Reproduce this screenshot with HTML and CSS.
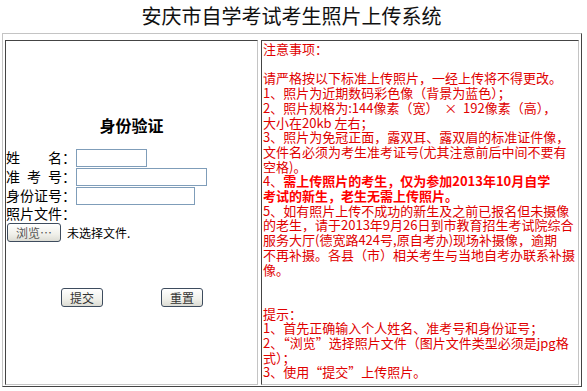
FILE: index.html
```html
<!DOCTYPE html>
<html lang="zh-CN">
<head>
<meta charset="utf-8">
<title>安庆市自学考试考生照片上传系统</title>
<link rel="stylesheet" href="styles.css">
</head>
<body>
<div class="title">安庆市自学考试考生照片上传系统</div>
<div class="frame">
  <div class="cell left">
    <h2 class="head">身份验证</h2>
    <div class="row"><span class="lbl">姓&emsp;&emsp;名：</span><input class="inp w1" type="text"></div>
    <div class="row"><span class="lbl">准&ensp;考&ensp;号：</span><input class="inp w2" type="text"></div>
    <div class="row"><span class="lbl">身份证号：</span><input class="inp w3" type="text"></div>
    <div class="row short"><span class="lbl">照片文件：</span></div>
    <div class="filerow"><button class="btn browse" type="button">浏览…</button><span class="nofile">未选择文件.</span></div>
    <div class="actions"><button class="btn act" type="button">提交</button><button class="btn act" type="button">重置</button></div>
  </div>
  <div class="cell right">注意事项：<br>
<br>
请严格按以下标准上传照片，一经上传将不得更改。<br>
1、照片为近期数码彩色像（背景为蓝色）；<br>
2、照片规格为:144像素（宽）&nbsp;&nbsp;×&nbsp;&nbsp;192像素（高），<br>
大小在20kb 左右；<br>
3、照片为免冠正面，露双耳、露双眉的标准证件像，<br>
文件名必须为考生准考证号(尤其注意前后中间不要有<br>
空格)。<br>
4、<b>需上传照片的考生，仅为参加2013年10月自学<br>考试的新生，老生无需上传照片。</b><br>
5、如有照片上传不成功的新生及之前已报名但未摄像<br>
的老生，请于2013年9月26日到市教育招生考试院综合<br>
服务大厅(德宽路424号,原自考办)现场补摄像，逾期<br>
不再补摄。各县（市）相关考生与当地自考办联系补摄<br>
像。<br>
<br>
<br>
提示：<br>
1、首先正确输入个人姓名、准考号和身份证号；<br>
2、“浏览”选择照片文件（图片文件类型必须是jpg格<br>
式）；<br>
3、使用“提交”上传照片。</div>
</div>
</body>
</html>
```
FILE: styles.css
```css
* { box-sizing: border-box; }
body {
  margin: 0;
  background: #fff;
  font-family: "Noto Sans CJK SC", "Liberation Sans", sans-serif;
  color: #000;
}
.title {
  text-align: center;
  font-size: 20px;
  line-height: 24px;
  padding-top: 4px;
  padding-right: 4px;
  color: #111;
}
.frame {
  margin: 5px 0 0 2px;
  width: 580px;
  height: 354px;
  border: 1px solid;
  border-color: #c4c4c4 #444 #444 #c4c4c4;
  padding: 6px 2px 1px 2px;
  display: flex;
  gap: 3px;
}
.cell {
  border: 1px solid;
  border-color: #444 #c4c4c4 #c4c4c4 #444;
}
.left {
  width: 253px;
  font-size: 14px;
}
.head {
  margin: 74px 0 13px 0;
  font-size: 16px;
  line-height: 20px;
  font-weight: bold;
  text-align: center;
}
.row {
  display: flex;
  align-items: flex-end;
  height: 19px;
}
.row.short { height: 18px; }
.lbl {
  width: 70px;
  line-height: 19px;
  white-space: nowrap;
}
.inp {
  height: 18px;
  border: 1px solid #7f9db9;
  padding: 0;
  margin: 0;
  background: #fff;
}
.w1 { width: 71px; }
.w2 { width: 131px; }
.w3 { width: 119px; }
.filerow {
  display: flex;
  align-items: center;
  height: 19px;
}
.btn {
  height: 19px;
  padding: 0;
  margin: 0;
  font-family: "Noto Sans CJK SC", sans-serif;
  font-size: 12px;
  line-height: 16px;
  color: #333;
  border: 1px solid #3e4c5e;
  border-radius: 3px;
  background: linear-gradient(#ffffff, #f0f0ea 60%, #dcdcd4);
}
.browse {
  width: 54px;
  margin-left: 1px;
  color: #555;
}
.nofile {
  margin-left: 6px;
  font-size: 12px;
}
.actions {
  display: flex;
  gap: 58px;
  margin-top: 46px;
  padding-left: 55px;
}
.act { width: 42px; }
.right {
  width: 318px;
  padding: 1px 0 0 1px;
  color: #e00000;
  font-size: 13px;
  line-height: 14.7px;
  white-space: nowrap;
  overflow: hidden;
}
.right b { color: #f00; }
```
